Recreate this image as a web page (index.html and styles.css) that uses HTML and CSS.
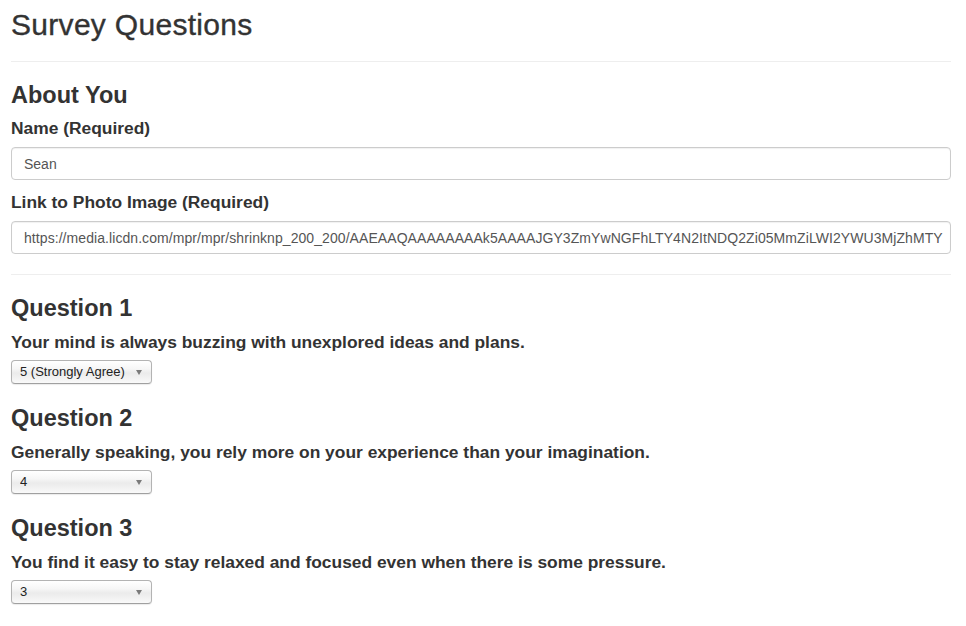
FILE: index.html
```html
<!DOCTYPE html>
<html lang="en">
<head>
<meta charset="utf-8">
<title>Survey Questions</title>
<link rel="stylesheet" href="styles.css">
</head>
<body>
<div class="container">
  <h1 class="page-title">Survey Questions</h1>
  <hr class="divider">
  <section class="section">
    <h3 class="section-title">About You</h3>
    <div class="form-group">
      <label class="field-label" for="name">Name (Required)</label>
      <input class="text-input" id="name" type="text" value="Sean">
    </div>
    <div class="form-group">
      <label class="field-label" for="photo">Link to Photo Image (Required)</label>
      <input class="text-input url-input" id="photo" type="text" value="https://media.licdn.com/mpr/mpr/shrinknp_200_200/AAEAAQAAAAAAAAk5AAAAJGY3ZmYwNGFhLTY4N2ItNDQ2Zi05MmZiLWI2YWU3MjZhMTY">
    </div>
  </section>
  <hr class="divider">
  <section class="question">
    <h3 class="section-title">Question 1</h3>
    <p class="question-text">Your mind is always buzzing with unexplored ideas and plans.</p>
    <span class="select-wrap">
      <select class="answer-select">
        <option>5 (Strongly Agree)</option>
      </select>
    </span>
  </section>
  <section class="question">
    <h3 class="section-title">Question 2</h3>
    <p class="question-text">Generally speaking, you rely more on your experience than your imagination.</p>
    <span class="select-wrap">
      <select class="answer-select">
        <option>4</option>
      </select>
    </span>
  </section>
  <section class="question">
    <h3 class="section-title">Question 3</h3>
    <p class="question-text">You find it easy to stay relaxed and focused even when there is some pressure.</p>
    <span class="select-wrap">
      <select class="answer-select">
        <option>3</option>
      </select>
    </span>
  </section>
</div>
</body>
</html>
```
FILE: styles.css
```css
* { box-sizing: border-box; }

html, body {
  margin: 0;
  padding: 0;
  background: #fff;
}

body {
  font-family: "Liberation Sans", Arial, Helvetica, sans-serif;
  color: #333;
}

.container {
  width: 966px;
  padding: 0 15px 0 11px;
}

.page-title {
  margin: 8px 0 0;
  font-size: 30px;
  line-height: 33px;
  font-weight: 400;
  letter-spacing: 0.3px;
  -webkit-text-stroke: 0.35px #333;
  color: #333;
}

.divider {
  margin: 20px 0;
  border: 0;
  border-top: 1px solid #eee;
  height: 0;
}

.section-title {
  margin: 0 0 8px;
  font-size: 23.5px;
  line-height: 26.4px;
  font-weight: 700;
  color: #333;
}

.form-group {
  display: flex;
  flex-direction: column;
}

.form-group + .form-group {
  margin-top: 10px;
}

.field-label,
.question-text {
  display: block;
  margin: 0 0 7px;
  font-size: 17.4px;
  line-height: 24px;
  font-weight: 700;
  color: #333;
}

.text-input {
  display: block;
  width: 940px;
  height: 33px;
  padding: 0 12px;
  border: 1px solid #ccc;
  border-radius: 4px;
  background: #fff;
  font-family: "Liberation Sans", Arial, Helvetica, sans-serif;
  font-size: 14px;
  color: #555;
  box-shadow: inset 0 1px 1px rgba(0, 0, 0, 0.06);
  outline: none;
}

.url-input {
  letter-spacing: 0.07px;
  padding-right: 2px;
}

.question {
  padding-bottom: 21.6px;
}

.question-text {
  margin-bottom: 6px;
}

.select-wrap {
  position: relative;
  display: inline-block;
  width: 141px;
  height: 24px;
}

.select-wrap::after {
  content: "";
  position: absolute;
  right: 10px;
  top: 10px;
  width: 0;
  height: 0;
  border-left: 3px solid transparent;
  border-right: 3px solid transparent;
  border-top: 5px solid #7a7a7a;
  pointer-events: none;
}

.answer-select {
  -webkit-appearance: none;
  appearance: none;
  display: block;
  width: 141px;
  height: 24px;
  margin: 0;
  padding: 0 0 0 8px;
  border: 1px solid #b3b3b3;
  border-bottom-color: #a0a0a0;
  border-radius: 4px;
  background: linear-gradient(to bottom, #ffffff 0%, #f6f6f6 35%, #ebebeb 55%, #f4f4f4 85%, #fafafa 100%);
  box-shadow: 0 1px 1px rgba(0, 0, 0, 0.08);
  font-family: "Liberation Sans", Arial, Helvetica, sans-serif;
  font-size: 13px;
  line-height: 22px;
  color: #222;
  outline: none;
}
```
